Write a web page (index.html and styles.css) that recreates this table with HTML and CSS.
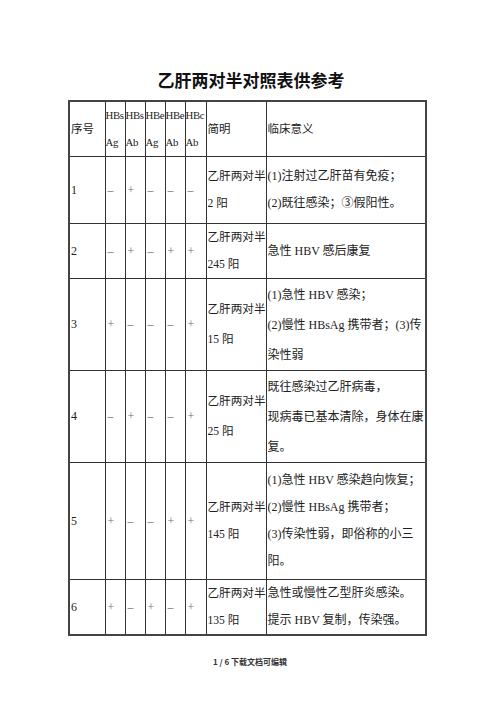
FILE: index.html
```html
<!DOCTYPE html>
<html lang="zh">
<head>
<meta charset="utf-8">
<link rel="stylesheet" href="styles.css">
</head>
<body>
<div class="page">
  <h1 class="title">乙肝两对半对照表供参考</h1>
  <table class="grid">
    <colgroup>
      <col class="c-no"><col class="c-m"><col class="c-m"><col class="c-m"><col class="c-m"><col class="c-m5"><col class="c-name"><col class="c-desc">
    </colgroup>
    <tr class="r-head">
      <td>序号</td>
      <td class="h">HBs<br>Ag</td>
      <td class="h">HBs<br>Ab</td>
      <td class="h">HBe<br>Ag</td>
      <td class="h">HBe<br>Ab</td>
      <td class="h">HBc<br>Ab</td>
      <td>简明</td>
      <td>临床意义</td>
    </tr>
    <tr class="r1">
      <td>1</td>
      <td class="s">–</td><td class="s">+</td><td class="s">–</td><td class="s">–</td><td class="s">–</td>
      <td class="name">乙肝两对半<br>2 阳</td>
      <td>(1)注射过乙肝苗有免疫；<br>(2)既往感染；③假阳性。</td>
    </tr>
    <tr class="r2">
      <td>2</td>
      <td class="s">–</td><td class="s">+</td><td class="s">–</td><td class="s">+</td><td class="s">+</td>
      <td class="name">乙肝两对半<br>245 阳</td>
      <td>急性 HBV 感后康复</td>
    </tr>
    <tr class="r3">
      <td>3</td>
      <td class="s">+</td><td class="s">–</td><td class="s">–</td><td class="s">–</td><td class="s">+</td>
      <td class="name">乙肝两对半<br>15 阳</td>
      <td>(1)急性 HBV 感染；<br>(2)慢性 HBsAg 携带者；(3)传<br>染性弱</td>
    </tr>
    <tr class="r4">
      <td>4</td>
      <td class="s">–</td><td class="s">+</td><td class="s">–</td><td class="s">–</td><td class="s">+</td>
      <td class="name">乙肝两对半<br>25 阳</td>
      <td>既往感染过乙肝病毒，<br>现病毒已基本清除，身体在康<br>复。</td>
    </tr>
    <tr class="r5">
      <td>5</td>
      <td class="s">+</td><td class="s">–</td><td class="s">–</td><td class="s">+</td><td class="s">+</td>
      <td class="name">乙肝两对半<br>145 阳</td>
      <td>(1)急性 HBV 感染趋向恢复；<br>(2)慢性 HBsAg 携带者；<br>(3)传染性弱，即俗称的小三<br>阳。</td>
    </tr>
    <tr class="r6">
      <td>6</td>
      <td class="s">+</td><td class="s">–</td><td class="s">+</td><td class="s">–</td><td class="s">+</td>
      <td class="name">乙肝两对半<br>135 阳</td>
      <td>急性或慢性乙型肝炎感染。<br>提示 HBV 复制，传染强。</td>
    </tr>
  </table>
  <div class="footer">1 / 6 下载文档可编辑</div>
</div>
</body>
</html>
```

FILE: styles.css
```css
html, body {
  margin: 0;
  padding: 0;
  background: #ffffff;
}
.page {
  width: 500px;
  height: 708px;
  padding-top: 69px;
  box-sizing: border-box;
}
.title {
  margin: 0;
  height: 31px;
  text-align: center;
  font-family: "Noto Sans CJK SC", sans-serif;
  font-weight: 700;
  font-size: 17px;
  line-height: 22px;
  color: #111111;
  padding-left: 2px;
}
.grid {
  margin-left: 68px;
  width: 358px;
  border-collapse: collapse;
  table-layout: fixed;
  border: 2px solid #444444;
  font-family: "Liberation Serif", "Noto Sans CJK SC", serif;
  font-size: 12px;
  line-height: 27px;
  color: #222222;
}
.c-no { width: 36px; }
.c-m { width: 20px; }
.c-m5 { width: 21px; }
.c-name { width: 60px; }
.c-desc { width: 160px; }
.grid td {
  border: 1px solid #333333;
  padding: 0 0 0 1px;
  vertical-align: middle;
  white-space: nowrap;
  overflow: visible;
}
.grid td.h {
  font-size: 10.8px;
  letter-spacing: -0.4px;
  padding-left: 0;
}
.grid td.s {
  color: #6e6e6e;
  padding-left: 2px;
}
.grid td.name {
  font-size: 11.6px;
  padding-left: 1px;
  overflow: hidden;
}
.r-head td { height: 51px; font-size: 11.5px; }
.r1 td { height: 66px; }
.r2 td { height: 52px; }
.r3 td { height: 91px; line-height: 30px; }
.r4 td { height: 91px; line-height: 30px; }
.r5 td { height: 116px; }
.r6 td { height: 53px; }
.r3 td.s, .r4 td.s, .r3 td:first-child, .r4 td:first-child { line-height: 27px; }
.footer {
  margin-top: 21px;
  text-align: center;
  font-family: "Noto Sans CJK SC", sans-serif;
  font-size: 8px;
  line-height: 10px;
  color: #333333;
  font-weight: 700;
}
```
